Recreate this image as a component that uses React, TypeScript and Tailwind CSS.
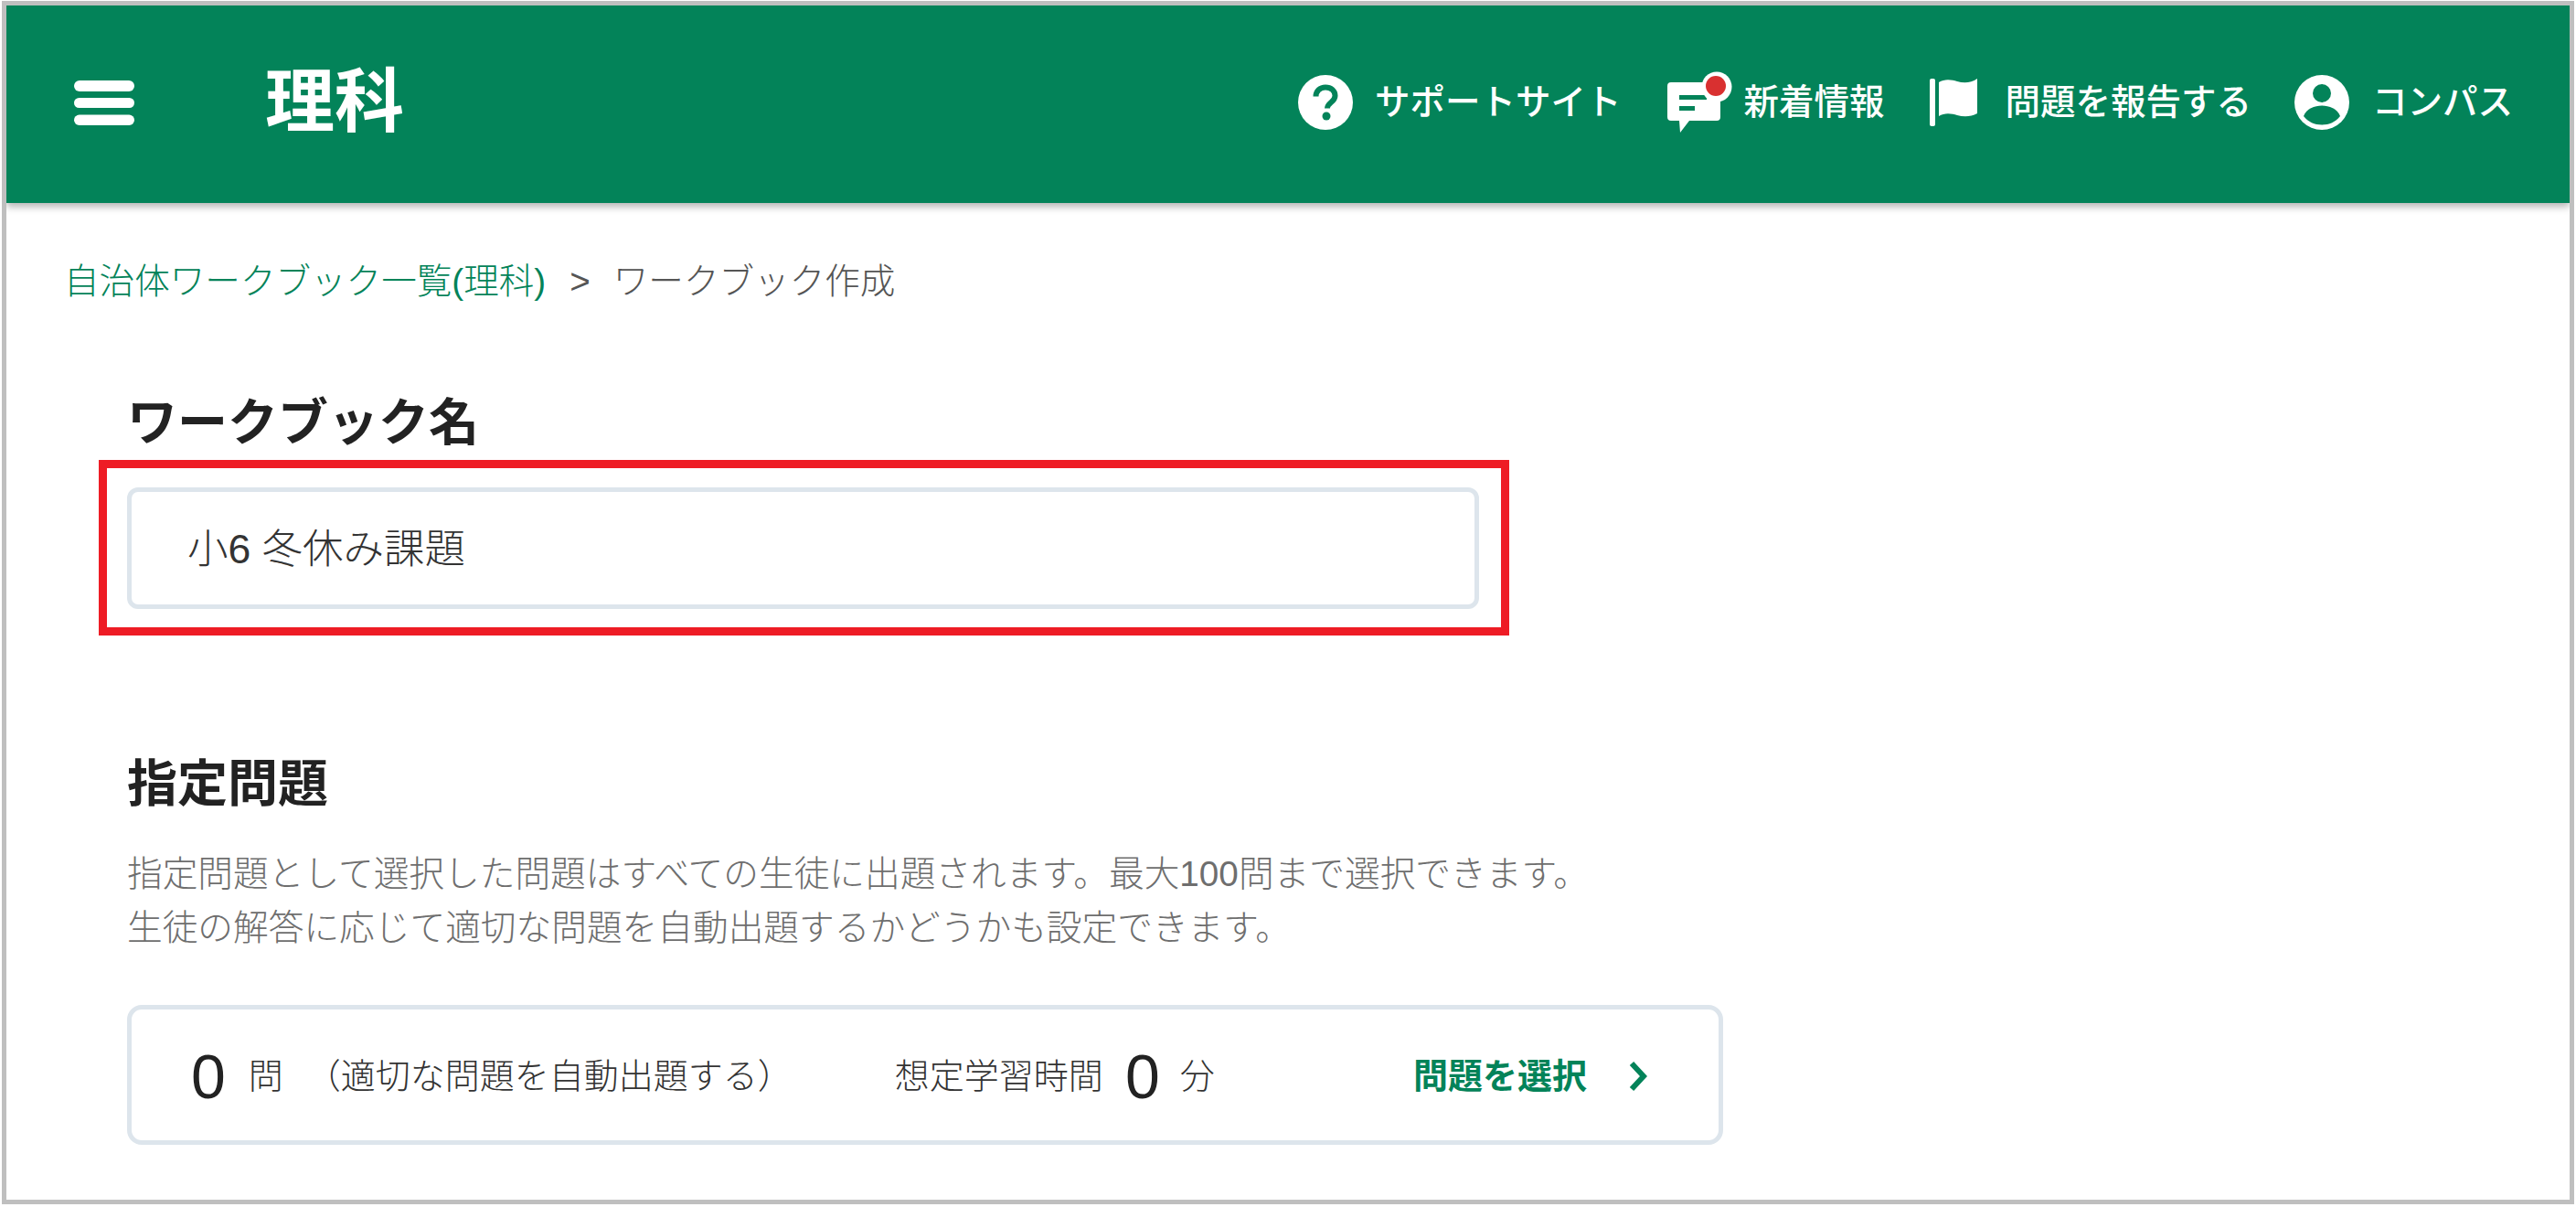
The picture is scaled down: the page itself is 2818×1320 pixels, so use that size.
import React from 'react'

const GREEN = '#038359'

const QuestionIcon = () => (
  <svg width="60" height="60" viewBox="0 0 60 60" className="shrink-0">
    <circle cx="30" cy="30" r="30" fill="#fff" />
    <path d="M19.500 23.500c0-6 4.500-10 10.500-10s10.500 3.800 10.500 9.300c0 7-8.500 7.400-8.500 13.700" fill="none" stroke={GREEN} strokeWidth="6" strokeLinecap="butt" />
    <circle cx="31" cy="45" r="4.500" fill={GREEN} />
  </svg>
)

const ChatIcon = () => (
  <svg width="72" height="68" viewBox="0 0 72 68" className="shrink-0">
    <path d="M4 12h50a4 4 0 0 1 4 4v34a4 4 0 0 1-4 4H24L14 67l-1-13H4a4 4 0 0 1-4-4V16a4 4 0 0 1 4-4z" fill="#fff" />
    <rect x="13" y="26" width="30" height="5" fill={GREEN} />
    <rect x="13" y="38" width="17" height="5" fill={GREEN} />
    <circle cx="54" cy="17" r="16.500" fill="#fff" />
    <circle cx="53" cy="16" r="11" fill="#d93030" />
  </svg>
)

const FlagIcon = () => (
  <svg width="52" height="52" viewBox="0 0 52 52" className="shrink-0">
    <rect x="0" y="0" width="6" height="52" rx="2" fill="#fff" />
    <path d="M10 4C16 0 24 1 30 3c7 2 15 2 22-3v38c-7 4-15 4-22 2-6-2-14-3-20 1z" fill="#fff" />
  </svg>
)

const PersonIcon = () => (
  <svg width="60" height="60" viewBox="0 0 60 60" className="shrink-0">
    <circle cx="30" cy="30" r="30" fill="#fff" />
    <circle cx="30" cy="20" r="10" fill={GREEN} />
    <path d="M10 45c3-8 12-11.500 20-11.500s17 3.500 20 11.500c-5 6.500-12 9.500-20 9.500s-15-3-20-9.500z" fill={GREEN} />
  </svg>
)

const NavItem = ({ icon, label, gap }: { icon: React.ReactNode; label: string; gap: string }) => (
  <div className={`flex items-center ${gap}`}>
    {icon}
    <span className="text-[38.500px] leading-none font-medium text-white whitespace-nowrap">{label}</span>
  </div>
)

export default function App() {
  return (
    <div className="h-[1320px] w-[2818px] bg-white pt-px px-[2px] pb-[3px] font-['Liberation_Sans','Noto_Sans_CJK_JP',sans-serif]">
      <div className="h-full border-[5px] border-[#bfbfbf] overflow-hidden">
        {/* Header */}
        <header className="flex h-[216px] items-center bg-[#038359] pb-1 pl-[74px] pr-[62px] shadow-[0_4px_8px_rgba(0,0,0,0.3)]">
          <svg width="66" height="49" viewBox="0 0 66 49" className="shrink-0">
            <rect y="0" width="66" height="12" rx="6" fill="#fff" />
            <rect y="19" width="66" height="11" rx="5.500" fill="#fff" />
            <rect y="37.500" width="66" height="11.500" rx="5.700" fill="#fff" />
          </svg>
          <h1 className="ml-[143px] text-[76px] leading-none font-bold text-white">理科</h1>
          <nav className="ml-auto flex items-center">
            <NavItem icon={<QuestionIcon />} label="サポートサイト" gap="gap-[24px]" />
            <div className="ml-[51px]">
              <NavItem icon={<ChatIcon />} label="新着情報" gap="gap-[11px]" />
            </div>
            <div className="ml-[50px]">
              <NavItem icon={<FlagIcon />} label="問題を報告する" gap="gap-[30px]" />
            </div>
            <div className="ml-[47px]">
              <NavItem icon={<PersonIcon />} label="コンパス" gap="gap-[25px]" />
            </div>
          </nav>
        </header>

        {/* Breadcrumb */}
        <div className="ml-[63px] mt-[58px] flex h-[56px] items-center text-[38.600px] leading-none font-light">
          <span className="text-[#038359]">自治体ワークブック一覧(理科)</span>
          <span className="ml-[26px] text-[#555]">&gt;</span>
          <span className="ml-[25px] text-[#555]">ワークブック作成</span>
        </div>

        <main className="ml-[132px]">
          <h2 className="mt-[90px] text-[55px] leading-[72px] font-bold text-[#222]">ワークブック名</h2>
          <div className="-ml-[31px] mt-[5px] h-[192px] w-[1543px] border-[9px] border-[#ee1c25] pl-[22px] pt-[21px]">
            <div className="flex h-[133px] w-[1479px] items-center rounded-[12px] border-[5px] border-[#dde5ec] pl-[61px] pt-[4px] text-[44.500px] font-light text-[#333]">
              小6 冬休み課題
            </div>
          </div>

          <h2 className="mt-[126px] text-[55px] leading-[72px] font-bold text-[#222]">指定問題</h2>
          <p className="mt-[33px] text-[38.700px] leading-[59px] font-light text-[#6e6e6e]">
            指定問題として選択した問題はすべての生徒に出題されます。最大100問まで選択できます。
            <br />
            生徒の解答に応じて適切な問題を自動出題するかどうかも設定できます。
          </p>

          <div className="mt-[55px] flex h-[153px] w-[1746px] items-center rounded-[16px] border-[5px] border-[#dde5ec] pl-[65px] pr-[78px] pt-[2px] text-[38px] leading-none font-light text-[#333]">
            <span className="text-[68px] text-[#222]">0</span>
            <span className="ml-[25px]">問</span>
            <span className="ml-[25px]">（適切な問題を自動出題する）</span>
            <span className="ml-[112px]">想定学習時間</span>
            <span className="ml-[24px] text-[68px] text-[#222]">0</span>
            <span className="ml-[22px]">分</span>
            <span className="ml-auto font-bold text-[#038359]">問題を選択</span>
            <svg width="20" height="34" viewBox="0 0 20 34" className="ml-[46px] shrink-0">
              <path d="M3 3l13 14L3 31" fill="none" stroke={GREEN} strokeWidth="6" />
            </svg>
          </div>
        </main>
      </div>
    </div>
  )
}
